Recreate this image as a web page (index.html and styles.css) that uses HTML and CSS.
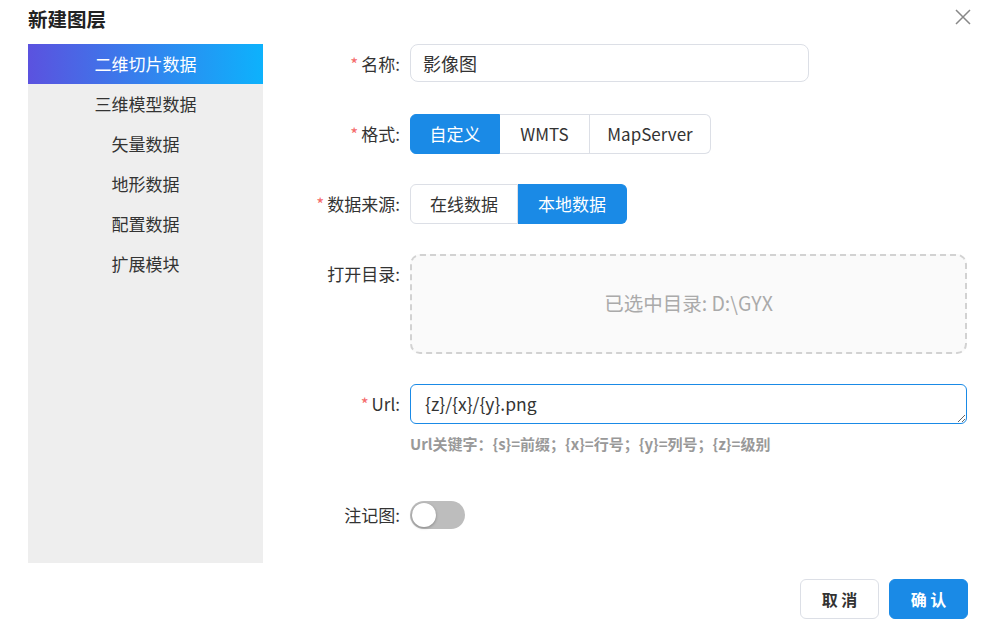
FILE: index.html
```html
<!DOCTYPE html>
<html lang="zh-CN">
<head>
  <meta charset="UTF-8">
  <title>新建图层</title>
  <link rel="stylesheet" href="styles.css">
</head>
<body>
  <div class="dialog">
    <div class="dialog-header">
      <span class="dialog-title">新建图层</span>
      <span class="dialog-close">
        <svg width="16" height="16" viewBox="0 0 16 16"><path d="M1 1 L15 15 M15 1 L1 15" stroke="#888" stroke-width="1.5" fill="none"/></svg>
      </span>
    </div>
    <div class="dialog-body">
      <ul class="side-menu">
        <li class="active">二维切片数据</li>
        <li>三维模型数据</li>
        <li>矢量数据</li>
        <li>地形数据</li>
        <li>配置数据</li>
        <li>扩展模块</li>
      </ul>
      <form class="layer-form">
        <div class="form-item">
          <label class="required">名称:</label>
          <div class="form-content">
            <input class="text-input" type="text" value="影像图">
          </div>
        </div>
        <div class="form-item">
          <label class="required">格式:</label>
          <div class="form-content">
            <div class="btn-group">
              <span class="seg active" style="width:90px">自定义</span>
              <span class="seg" style="width:90px">WMTS</span>
              <span class="seg" style="width:121px">MapServer</span>
            </div>
          </div>
        </div>
        <div class="form-item">
          <label class="required">数据来源:</label>
          <div class="form-content">
            <div class="btn-group">
              <span class="seg" style="width:108px">在线数据</span>
              <span class="seg active" style="width:109px">本地数据</span>
            </div>
          </div>
        </div>
        <div class="form-item">
          <label>打开目录:</label>
          <div class="form-content">
            <div class="dir-box">已选中目录: D:\GYX</div>
          </div>
        </div>
        <div class="form-item">
          <label class="required">Url:</label>
          <div class="form-content">
            <textarea class="url-input" rows="1">{z}/{x}/{y}.png</textarea>
            <div class="hint">Url关键字：{s}=前缀；{x}=行号；{y}=列号；{z}=级别</div>
          </div>
        </div>
        <div class="form-item">
          <label>注记图:</label>
          <div class="form-content">
            <span class="switch"><span class="knob"></span></span>
          </div>
        </div>
      </form>
    </div>
    <div class="dialog-footer">
      <button type="button" class="btn">取 消</button>
      <button type="button" class="btn btn-primary">确 认</button>
    </div>
  </div>
</body>
</html>
```

FILE: styles.css
```css
:root {
  --primary: #1a8ae6;
  --border: #dcdfe6;
  --text: #303133;
}

* {
  margin: 0;
  padding: 0;
  box-sizing: border-box;
}

body {
  background: #fff;
  font-family: "Noto Sans CJK SC", "Noto Sans", sans-serif;
  color: var(--text);
  width: 996px;
  height: 626px;
  overflow: hidden;
}

.dialog {
  padding: 0 28px;
}

.dialog-header {
  height: 44px;
  display: flex;
  align-items: flex-start;
  justify-content: space-between;
}

.dialog-title {
  font-size: 19.5px;
  font-weight: bold;
  line-height: 38px;
  color: #222;
}

.dialog-close {
  margin-top: 6px;
  margin-right: -3px;
  cursor: pointer;
}

.dialog-body {
  display: flex;
}

.side-menu {
  list-style: none;
  width: 235px;
  height: 519px;
  background: #eeeeee;
}

.side-menu li {
  height: 40px;
  line-height: 40px;
  text-align: center;
  font-size: 17px;
  color: #333;
}

.side-menu li.active {
  color: #fff;
  background: linear-gradient(90deg, #5b52df 0%, #0db2fc 100%);
}

.layer-form {
  flex: 1;
}

.form-item {
  display: flex;
  margin-bottom: 30px;
}

.form-item label {
  width: 147px;
  padding-right: 10px;
  text-align: right;
  font-size: 17px;
  line-height: 40px;
  color: #333;
}

.form-item label.required::before {
  content: "*";
  color: #f56c6c;
  margin-right: 3px;
}

.form-content {
  flex: 1;
}

.text-input {
  width: 399px;
  height: 38px;
  border: 1px solid var(--border);
  border-radius: 8px;
  padding: 0 12px;
  font-size: 18px;
  font-family: inherit;
  color: #333;
  outline: none;
}

.btn-group {
  display: flex;
  height: 40px;
}

.seg {
  height: 40px;
  line-height: 38px;
  text-align: center;
  font-size: 17px;
  color: #333;
  border: 1px solid var(--border);
  border-left: none;
}

.seg:first-child {
  border-left: 1px solid var(--border);
  border-radius: 6px 0 0 6px;
}

.seg:last-child {
  border-radius: 0 6px 6px 0;
}

.seg.active {
  background: var(--primary);
  border-color: var(--primary);
  color: #fff;
}

.dir-box {
  width: 557px;
  height: 100px;
  padding-bottom: 3px;
  border: 2px dashed #d2d2d2;
  border-radius: 10px;
  background: #fafafa;
  color: #aaa;
  font-size: 19.5px;
  display: flex;
  align-items: center;
  justify-content: center;
}

.url-input {
  display: block;
  width: 557px;
  height: 40px;
  border: 1px solid var(--primary);
  border-radius: 6px;
  padding: 7px 14px;
  font-size: 17.5px;
  line-height: 24px;
  font-family: inherit;
  color: #333;
  outline: none;
  resize: vertical;
}

.hint {
  margin-top: 9px;
  font-size: 15px;
  font-weight: bold;
  color: #999;
  line-height: 22px;
  margin-bottom: 10px;
}

.switch {
  display: inline-block;
  position: relative;
  width: 55px;
  height: 28px;
  margin-top: 6px;
  border-radius: 14px;
  background: #bdbdbd;
}

.switch .knob {
  position: absolute;
  left: 2px;
  top: 2px;
  width: 24px;
  height: 24px;
  border-radius: 50%;
  background: #fff;
  box-shadow: 0 1px 3px rgba(0, 0, 0, 0.3);
}

.dialog-footer {
  display: flex;
  justify-content: flex-end;
  gap: 10px;
  margin-top: 14px;
}

.btn {
  width: 79px;
  height: 40px;
  border: 1px solid var(--border);
  border-radius: 6px;
  background: #fff;
  font-size: 16px;
  font-weight: bold;
  font-family: inherit;
  color: #333;
  cursor: pointer;
}

.btn-primary {
  background: var(--primary);
  border-color: var(--primary);
  color: #fff;
}
```
